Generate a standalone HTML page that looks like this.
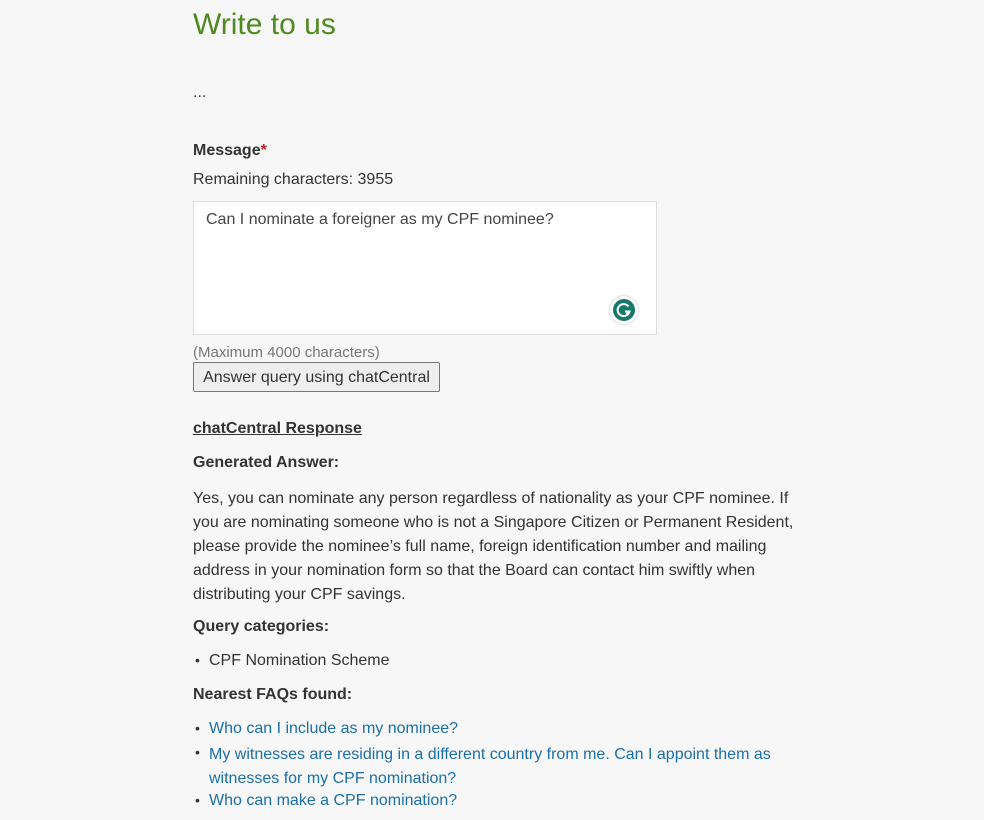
<!DOCTYPE html>
<html><head><meta charset="utf-8"><style>
body{margin:0;background:#f7f7f7;width:984px;height:820px;overflow:hidden;font-family:"Liberation Sans",sans-serif;color:#333;font-size:16px}
.a{position:absolute;left:193px;white-space:nowrap}
h1{position:absolute;left:193px;top:8px;margin:0;font-weight:normal;font-size:30px;color:#4e8a1e}
b{font-weight:bold}
.box{position:absolute;left:193px;top:201px;width:462px;height:132px;background:#fff;border:1px solid #ddd}
.btn{position:absolute;left:193px;top:362px;width:245px;height:28px;border:1px solid #777;background:#eee;border-radius:2px;font-size:16px;line-height:29px;text-align:center;color:#333}
.li{position:absolute;left:209px;white-space:nowrap}
.dot{position:absolute;left:195px;font-size:14px}
.lk{color:#1a6fa8}
</style></head><body>
<h1>Write to us</h1>
<div class="a" style="top:84px">...</div>
<div class="a" style="top:142px"><b>Message</b><span style="color:#b22;font-weight:bold">*</span></div>
<div class="a" style="top:171px">Remaining characters: 3955</div>
<div class="box"><div style="position:absolute;left:12px;top:9px;color:#444">Can I nominate a foreigner as my CPF nominee?</div>
<div style="position:absolute;left:416px;top:94px;width:28px;height:28px;border-radius:50%;background:#fff;box-shadow:0 0 2px #aaa">
<svg width="28" height="28" viewBox="0 0 28 28" style="position:absolute;left:0;top:0"><circle cx="14" cy="14" r="11" fill="#167a6a"/><path d="M18.5 10.5 A6 6 0 1 0 19.5 15.5 L15 15.5" fill="none" stroke="#fff" stroke-width="2"/><path d="M16.5 18 L19.5 15.5" stroke="#fff" stroke-width="2" fill="none"/></svg></div></div>
<div class="a" style="top:344px;color:#777;font-size:15px">(Maximum 4000 characters)</div>
<div class="btn">Answer query using chatCentral</div>
<div class="a" style="top:420px;text-decoration:underline"><b>chatCentral Response</b></div>
<div class="a" style="top:454px"><b>Generated Answer:</b></div>
<div class="a" style="top:487px;line-height:24px">Yes, you can nominate any person regardless of nationality as your CPF nominee. If<br>you are nominating someone who is not a Singapore Citizen or Permanent Resident,<br>please provide the nominee’s full name, foreign identification number and mailing<br>address in your nomination form so that the Board can contact him swiftly when<br>distributing your CPF savings.</div>
<div class="a" style="top:618px"><b>Query categories:</b></div>
<div class="dot" style="top:652px">•</div><div class="li" style="top:652px">CPF Nomination Scheme</div>
<div class="a" style="top:686px"><b>Nearest FAQs found:</b></div>
<div class="dot" style="top:720px">•</div><div class="li lk" style="top:720px">Who can I include as my nominee?</div>
<div class="dot" style="top:744px">•</div><div class="li lk" style="top:743px;line-height:24px">My witnesses are residing in a different country from me. Can I appoint them as<br>witnesses for my CPF nomination?</div>
<div class="dot" style="top:792px">•</div><div class="li lk" style="top:792px">Who can make a CPF nomination?</div>
</body></html>
